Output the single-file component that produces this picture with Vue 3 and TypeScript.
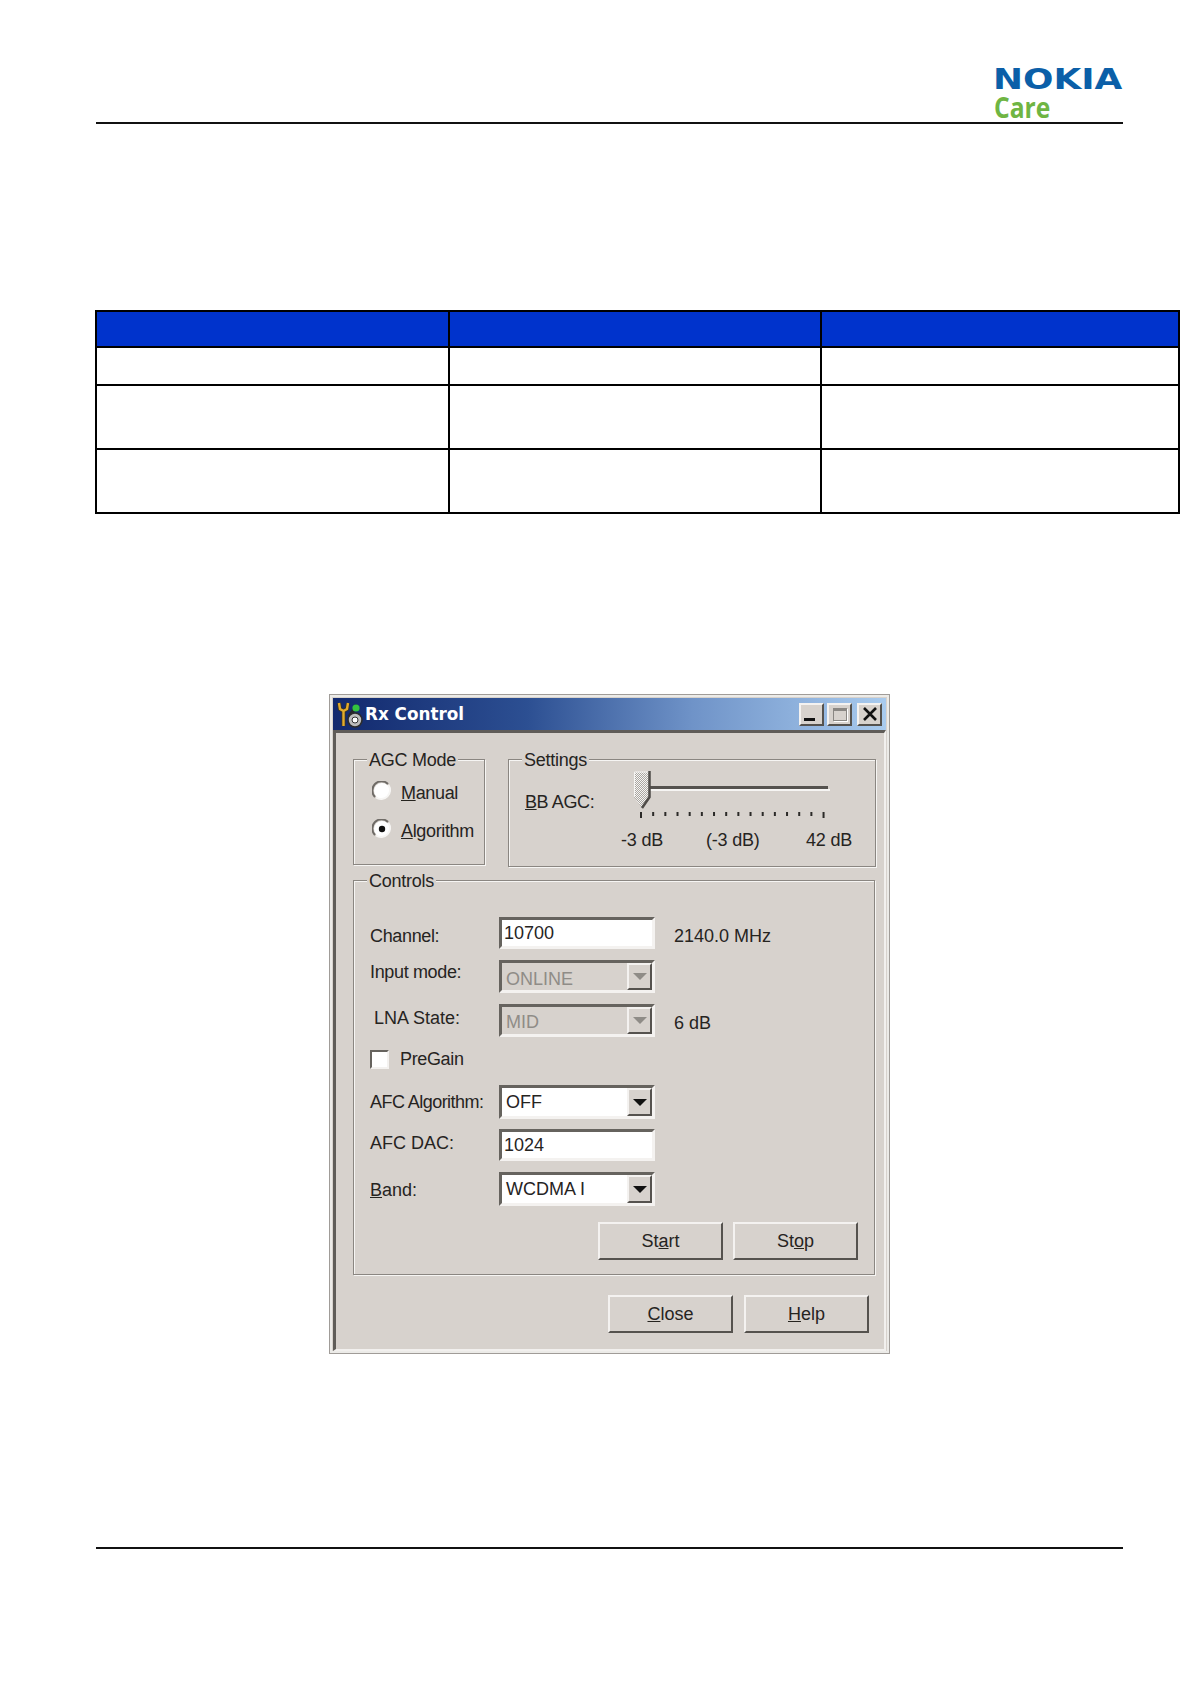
<script setup lang="ts">
const ticks: number[] = Array.from({ length: 16 }, (_, i) => i)
const columns: number[] = [0, 1, 2]
const rowClasses: string[] = ['r1', 'r2', 'r2']
</script>

<template>
  <div class="page">
    <header class="head">
      <div class="logo">
        <span class="nokia">NOKIA</span>
        <span class="care">Care</span>
      </div>
    </header>

    <table class="tbl">
      <thead>
        <tr><th v-for="c in columns" :key="c" :class="'c' + c"></th></tr>
      </thead>
      <tbody>
        <tr v-for="(r, i) in rowClasses" :key="i" :class="r">
          <td v-for="c in columns" :key="c"></td>
        </tr>
      </tbody>
    </table>

    <div class="dialog">
      <div class="title">
        <svg class="appicon" width="27" height="27" viewBox="0 0 27 27">
          <path d="M2 2l1 6 3.500 2V25" fill="none" stroke="#3a3320" stroke-width="4" />
          <path d="M11 2l-1 6-3.500 2" fill="none" stroke="#3a3320" stroke-width="4" />
          <path d="M2 2l1 6 3.500 2V25M11 2l-1 6-3.500 2" fill="none" stroke="#e3ab2c" stroke-width="2.400" />
          <path d="M12 16L20 4" stroke="#26262a" stroke-width="3.500" />
          <circle cx="19" cy="7" r="3.600" fill="#33c23f" />
          <circle cx="18" cy="19" r="7" fill="#bdbdbd" stroke="#2c2c2c" stroke-width="1.600" />
          <circle cx="18" cy="19" r="3" fill="#fff" stroke="#333" />
        </svg>
        <span class="title-text">Rx Control</span>
        <div class="winbtns">
          <button class="wb wb-min"><i></i></button>
          <button class="wb wb-max"><i></i></button>
          <button class="wb wb-close">
            <svg width="16" height="14" viewBox="0 0 16 14"><path d="M2 1l12 12M14 1L2 13" stroke="#111" stroke-width="2.600" /></svg>
          </button>
        </div>
      </div>

      <div class="body">
        <div class="top-row">
          <div class="group agc">
            <span class="legend">AGC Mode</span>
            <div class="radio-row first">
              <svg class="radio" width="20" height="20" viewBox="0 0 20 20">
                <circle cx="10" cy="10" r="8" fill="#fff" />
                <path d="M3 16A9 9 0 0 1 16 3" fill="none" stroke="#6f6b66" stroke-width="2" />
                <path d="M16.500 4A9 9 0 0 1 4 16.500" fill="none" stroke="#f7f6f4" stroke-width="2" />
              </svg>
              <span class="txt"><u>M</u>anual</span>
            </div>
            <div class="radio-row second">
              <svg class="radio" width="20" height="20" viewBox="0 0 20 20">
                <circle cx="10" cy="10" r="8" fill="#fff" />
                <path d="M3 16A9 9 0 0 1 16 3" fill="none" stroke="#6f6b66" stroke-width="2" />
                <path d="M16.500 4A9 9 0 0 1 4 16.500" fill="none" stroke="#f7f6f4" stroke-width="2" />
                <circle cx="10" cy="10" r="3.200" fill="#111" />
              </svg>
              <span class="txt"><u>A</u>lgorithm</span>
            </div>
          </div>

          <div class="group settings">
            <span class="legend">Settings</span>
            <div class="slider-row">
              <span class="bb"><u>B</u>B AGC:</span>
              <svg class="slider" width="200" height="50" viewBox="0 0 200 50">
                <defs>
                  <pattern id="thumbdots" width="2" height="2" patternUnits="userSpaceOnUse">
                    <rect width="2" height="2" fill="#f6f5f3" />
                    <rect width="1" height="1" fill="#aaa6a1" />
                    <rect x="1" y="1" width="1" height="1" fill="#aaa6a1" />
                  </pattern>
                </defs>
                <rect x="8" y="15" width="186" height="3" fill="#55524e" />
                <rect x="8" y="18" width="188" height="2" fill="#f6f5f3" />
                <path d="M0 1H16V26L8 37L0 26Z" fill="url(#thumbdots)" />
                <path d="M0.500 26V1H15" fill="none" stroke="#f6f5f3" />
                <path d="M15.500 0V26L8 37" fill="none" stroke="#4f4c48" stroke-width="2.500" />
                <rect
                  v-for="t in ticks"
                  :key="t"
                  :x="6 + t * 12.17"
                  :y="41"
                  width="2"
                  :height="t === 0 || t === 15 ? 6 : 4"
                  fill="#2b2a28"
                />
              </svg>
            </div>
            <div class="slider-labels">
              <span class="l1">-3 dB</span>
              <span class="l2">(-3 dB)</span>
              <span>42 dB</span>
            </div>
          </div>
        </div>

        <div class="group controls">
          <span class="legend">Controls</span>

          <div class="row ch">
            <span class="lab low txt">Channel:</span>
            <div class="sunken"><span class="val">10700</span></div>
            <span class="note low">2140.0 MHz</span>
          </div>
          <div class="row im">
            <span class="lab high txt">Input mode:</span>
            <div class="sunken disabled combo">
              <span class="val nudge">ONLINE</span>
              <span class="arrow dim"><i></i></span>
            </div>
          </div>
          <div class="row lna">
            <span class="lab indent">LNA State:</span>
            <div class="sunken disabled combo">
              <span class="val nudge-s">MID</span>
              <span class="arrow dim"><i></i></span>
            </div>
            <span class="note six">6 dB</span>
          </div>
          <div class="row pg">
            <span class="check"></span>
            <span class="txt">PreGain</span>
          </div>
          <div class="row afc">
            <span class="lab tight">AFC Algorithm:</span>
            <div class="sunken combo">
              <span class="val">OFF</span>
              <span class="arrow"><i></i></span>
            </div>
          </div>
          <div class="row dac">
            <span class="lab rise">AFC DAC:</span>
            <div class="sunken"><span class="val">1024</span></div>
          </div>
          <div class="row band">
            <span class="lab drop"><u>B</u>and:</span>
            <div class="sunken combo">
              <span class="val">WCDMA I</span>
              <span class="arrow"><i></i></span>
            </div>
          </div>

          <div class="actions inner">
            <button class="btn">St<u>a</u>rt</button>
            <button class="btn">St<u>o</u>p</button>
          </div>
        </div>

        <div class="actions outer">
          <button class="btn"><u>C</u>lose</button>
          <button class="btn"><u>H</u>elp</button>
        </div>
      </div>
    </div>

    <footer class="foot"></footer>
  </div>
</template>

<style scoped>
.page {
  width: 1191px;
  height: 1684px;
  box-sizing: border-box;
  padding-left: 96px;
  background: #fff;
  overflow: hidden;
  font-family: "Liberation Sans", Arial, sans-serif;
  font-size: 18px;
  color: #26241f;
}
.head {
  width: 1027px;
  height: 124px;
  box-sizing: border-box;
  border-bottom: 2px solid #111;
  display: flex;
  justify-content: flex-end;
}
.logo {
  width: 130px;
  padding-top: 68px;
  display: flex;
  flex-direction: column;
}
.nokia {
  font-family: "DejaVu Sans", sans-serif;
  font-weight: 700;
  font-size: 28px;
  line-height: 24px;
  height: 24px;
  color: #0b5fa8;
  transform: scaleX(1.28);
  transform-origin: left center;
}
.care {
  font-family: "Open Sans", sans-serif;
  font-weight: 700;
  font-size: 28px;
  line-height: 28px;
  margin-top: 1px;
  margin-left: 1px;
  color: #6fb543;
  transform: scaleX(0.88);
  transform-origin: left center;
}
.tbl {
  margin-top: 186px;
  margin-left: -1px;
  width: 1085px;
  border-collapse: collapse;
  table-layout: fixed;
  border: 2px solid #000;
}
.tbl th {
  height: 34px;
  padding: 0;
  background: #0033cc;
  border: 2px solid #000;
}
.tbl .c0 { width: 351px; }
.tbl .c1 { width: 370px; }
.tbl td {
  padding: 0;
  border: 2px solid #000;
}
.r1 td { height: 36px; }
.r2 td { height: 62px; }

.dialog {
  margin-top: 180px;
  margin-left: 233px;
  width: 561px;
  height: 660px;
  box-sizing: border-box;
  background: #d7d2cd;
  border: 1px solid #a09c98;
  box-shadow: inset 0 0 0 2px #ecebe8;
  padding: 3px 3px 2px;
  display: flex;
  flex-direction: column;
}
.title {
  height: 32px;
  flex: none;
  display: flex;
  align-items: center;
  background: linear-gradient(90deg, #12296e 0%, #2c4f92 35%, #6f93c8 65%, #a9cbee 100%);
  padding-left: 4px;
  padding-right: 4px;
}
.appicon { flex: none; }
.title-text {
  margin-left: 1px;
  font-family: "DejaVu Sans", sans-serif;
  font-weight: 700;
  font-size: 16.800px;
  color: #fff;
}
.winbtns {
  margin-left: auto;
  display: flex;
  gap: 3px;
}
.wb {
  width: 25px;
  height: 23px;
  padding: 0;
  box-sizing: border-box;
  background: #d7d2cd;
  border: 2px solid;
  border-color: #f4f2f0 #55524e #55524e #f4f2f0;
  display: flex;
  align-items: center;
  justify-content: center;
}
.wb-close { margin-left: 2px; }
.wb-min i {
  width: 11px;
  height: 3px;
  background: #111;
  margin-top: 10px;
  margin-right: 4px;
}
.wb-max i {
  width: 14px;
  height: 13px;
  box-sizing: border-box;
  border: 1px solid #8a8783;
  border-top-width: 3px;
  box-shadow: 1px 1px 0 #fff;
}
.body {
  flex: 1;
  box-sizing: border-box;
  border-top: 3px solid #5f5c58;
  border-left: 3px solid #5f5c58;
  border-right: 2px solid #f2f0ee;
  border-bottom: 2px solid #f2f0ee;
  padding: 26px 0 0 17px;
}
.top-row {
  display: flex;
  gap: 23px;
}
.group {
  position: relative;
  box-sizing: border-box;
  border: 1px solid #8a8681;
  box-shadow: 1px 1px 0 #f6f5f3, inset 1px 1px 0 #f6f5f3;
}
.legend {
  position: absolute;
  left: 13px;
  top: -10px;
  padding: 0 2px;
  line-height: 20px;
  background: #d7d2cd;
  white-space: nowrap;
  letter-spacing: -0.25px;
}
.txt { letter-spacing: -0.35px; }
.agc {
  width: 132px;
  height: 106px;
  flex: none;
}
.radio-row {
  display: flex;
  align-items: center;
  gap: 9px;
  padding-left: 18px;
  white-space: nowrap;
}
.radio-row .txt {
  position: relative;
  top: 3px;
}
.first { margin-top: 20px; }
.second { margin-top: 17px; }
.settings {
  width: 368px;
  height: 108px;
  flex: none;
}
.slider-row {
  display: flex;
  padding: 11px 0 0 16px;
}
.bb {
  width: 109px;
  margin-top: 20px;
  line-height: 22px;
  letter-spacing: -0.4px;
}
.slider { flex: none; }
.slider-labels {
  display: flex;
  padding-left: 112px;
  margin-top: 9px;
  white-space: nowrap;
  letter-spacing: -0.2px;
}
.l1 { width: 85px; }
.l2 { width: 100px; }

.controls {
  margin-top: 13px;
  width: 522px;
  height: 395px;
  padding: 36px 16px 0 16px;
}
.row {
  display: flex;
  align-items: center;
  white-space: nowrap;
}
.lab {
  width: 129px;
  flex: none;
}
.low { position: relative; top: 3px; }
.high { position: relative; top: -4px; }
.indent { padding-left: 4px; width: 125px; position: relative; top: -2px; }
.tight { letter-spacing: -0.55px; }
.rise { position: relative; top: -2px; }
.drop { position: relative; top: 1px; }
.note { margin-left: 19px; }
.six { position: relative; top: 3px; }
.nudge { position: relative; top: 3px; }
.nudge-s { position: relative; top: 2px; }
.ch { height: 32px; }
.im { height: 33px; margin-top: 11px; }
.lna { height: 33px; margin-top: 11px; }
.pg { height: 20px; margin-top: 12px; gap: 11px; }
.afc { height: 34px; margin-top: 16px; }
.dac { height: 32px; margin-top: 10px; }
.band { height: 34px; margin-top: 11px; }
.sunken {
  width: 156px;
  height: 100%;
  flex: none;
  box-sizing: border-box;
  background: #fff;
  border: 3px solid;
  border-color: #66635e #f4f2f0 #f4f2f0 #66635e;
  display: flex;
  align-items: center;
  justify-content: space-between;
  padding-left: 2px;
}
.combo { padding-left: 4px; }
.disabled {
  background: #d7d2cd;
  color: #8f8c87;
}
.arrow {
  width: 25px;
  height: 100%;
  box-sizing: border-box;
  background: #d7d2cd;
  border: 2px solid;
  border-color: #f4f2f0 #55524e #55524e #f4f2f0;
  display: flex;
  align-items: center;
  justify-content: center;
}
.arrow i {
  width: 0;
  height: 0;
  border-left: 7px solid transparent;
  border-right: 7px solid transparent;
  border-top: 7px solid #111;
}
.dim i { border-top-color: #8f8c87; }
.check {
  width: 19px;
  height: 19px;
  box-sizing: border-box;
  background: #fff;
  border: 2px solid;
  border-color: #66635e #f4f2f0 #f4f2f0 #66635e;
  flex: none;
}
.actions {
  display: flex;
  justify-content: flex-end;
  gap: 10px;
}
.inner { margin-top: 16px; }
.outer {
  margin-top: 20px;
  width: 516px;
  gap: 11px;
}
.btn {
  width: 125px;
  height: 38px;
  padding: 0;
  box-sizing: border-box;
  background: #d7d2cd;
  border: 2px solid;
  border-color: #f4f2f0 #55524e #55524e #f4f2f0;
  font: inherit;
  color: inherit;
}
.foot {
  margin-top: 193px;
  width: 1027px;
  border-top: 2px solid #111;
}
</style>
